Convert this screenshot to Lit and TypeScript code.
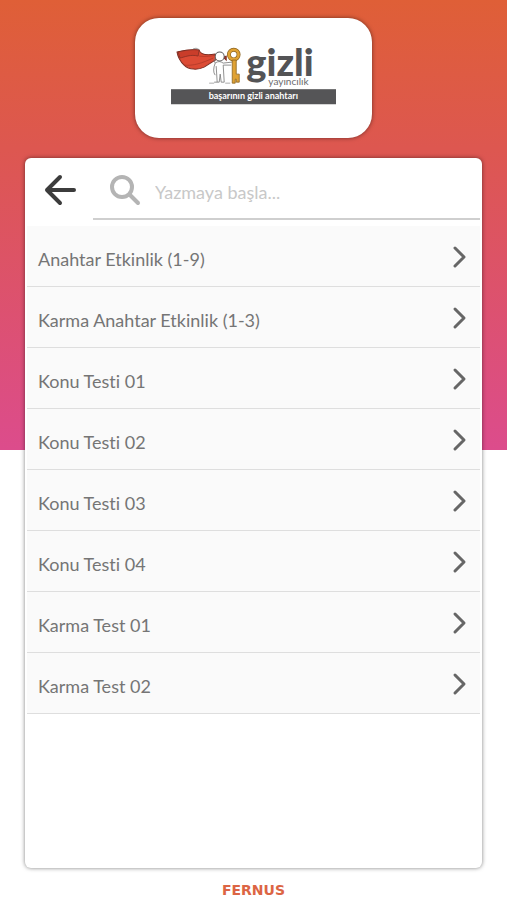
import { LitElement, html, css, svg } from "lit";
import { customElement, state } from "lit/decorators.js";

const ITEMS = [
  "Anahtar Etkinlik (1-9)",
  "Karma Anahtar Etkinlik (1-3)",
  "Konu Testi 01",
  "Konu Testi 02",
  "Konu Testi 03",
  "Konu Testi 04",
  "Karma Test 01",
  "Karma Test 02",
];

@customElement("brand-logo")
class BrandLogo extends LitElement {
  static styles = css`
    :host { display: block; }
    svg { display: block; width: 100%; height: auto; }
    .name { font: 900 38px Lato, sans-serif; fill: #545456; }
    .sub { font: 400 10px Lato, sans-serif; fill: #6c6c6e; }
    .motto { font: 700 9px Lato, sans-serif; fill: #fff; }
  `;

  render() {
    return html`
      <svg viewBox="0 -12 165 69" role="img" aria-label="gizli yayıncılık">
        ${svg`
        <path d="M6 4 C14 2 22 1 28 2 C29 5 33 8 44 6 L46 11 C42 13 38 16 33 19 C27 22 18 22 13 17 C10 14 7 10 6 4Z" fill="#dc4b35" stroke="#7d2d22" stroke-width="1"/>
        <path d="M7 4 C15 2 22 1 28 2 L27 8 C20 6 13 9 9 10Z" fill="#c93d2a" stroke="#7d2d22" stroke-width=".7"/>
        <path d="M28 8 C35 9 40 8 45 7 M13 17 C22 18 31 15 42 10" fill="none" stroke="#a93626" stroke-width=".7"/>
        <path d="M22 .8 Q25 -.8 28 1.5" fill="none" stroke="#777" stroke-width=".7"/>
        <path d="M52 9 l3 3 v-4z" fill="#a93626" stroke="#7d2d22" stroke-width="1"/>
        <path d="M44 15 Q48 12 52 15 L61 14 Q64 12 68 10 M52 17 L60 17 M44 15 Q41 23 44 27 M45 18 L46 34 H43 M52 17 L53 34 H50 L49 26 L48 34 H46 M44 15 Q42 12 44 10" fill="none" stroke="#777" stroke-width=".8"/>
        <circle cx="48.500" cy="8.500" r="4.500" fill="#fff" stroke="#5c5c5c" stroke-width="1"/>
        <path d="M38 35 H43 M54 35 H59" stroke="#999" stroke-width=".8"/>
        <circle cx="62.500" cy="6.500" r="4.800" fill="none" stroke="#8c6420" stroke-width="4"/>
        <circle cx="62.500" cy="6.500" r="4.800" fill="none" stroke="#e0a233" stroke-width="2.600"/>
        <path d="M61 12 H65 V26 H68 V34 H65 V31 H64 V35 H61Z" fill="#e0a233" stroke="#8c6420" stroke-width=".8"/>
        <text class="name" x="75" y="28">gizli</text>
        <text class="sub" x="97" y="37">yayıncılık</text>
        <rect y="41" width="165" height="15" fill="#555557"/>
        <text class="motto" x="82" y="51" text-anchor="middle">başarının gizli anahtarı</text>
        `}
      </svg>
    `;
  }
}

@customElement("app-root")
class AppRoot extends LitElement {
  static styles = css`
    :host {
      display: block;
      font-family: Lato, sans-serif;
      font-variant-ligatures: none;
      color: #757575;
    }
    * { box-sizing: border-box; }
    .page {
      min-height: 100vh;
      display: flex;
      flex-direction: column;
      padding: 18px 25px 0;
      background: linear-gradient(#df5f37, #dd5750 33%, #dc4c8c) top / 100% 50vh no-repeat #fff;
    }
    .brand {
      align-self: center;
      width: 52%;
      max-width: 320px;
      padding: 18px 36px 33px;
      border-radius: 24px;
      background: #fff;
      box-shadow: 0 0 4px rgba(0, 0, 0, 0.5);
    }
    .panel {
      flex: 1;
      margin-top: 20px;
      padding: 3px 2px;
      border-radius: 6px;
      background: #fff;
      box-shadow: 0 0 4px rgba(0, 0, 0, 0.5);
    }
    button {
      border: 0;
      background: none;
      font: inherit;
      font-variant-ligatures: none;
      color: inherit;
      cursor: pointer;
    }
    .top { display: flex; align-items: stretch; height: 59px; }
    .back { width: 66px; padding: 0; display: grid; place-items: center; }
    .search {
      flex: 1;
      display: flex;
      align-items: center;
      gap: 14px;
      padding-left: 16px;
      border-bottom: 2px solid #cfcfcf;
    }
    input {
      flex: 1;
      min-width: 0;
      height: 40px;
      padding: 4px 0 0;
      border: 0;
      outline: 0;
      background: none;
      font: inherit;
      font-size: 18px;
      color: #757575;
    }
    input::placeholder { color: #c8c8c8; opacity: 1; }
    ul { list-style: none; margin: 6px 0 0; padding: 0; }
    li { border-bottom: 1px solid #dedede; background: #fafafa; }
    .row {
      width: 100%;
      height: 60px;
      padding: 2px 13px 0 11px;
      display: flex;
      align-items: center;
      justify-content: space-between;
      font-size: 18px;
      text-align: left;
    }
    .label { padding-top: 4px; }
    svg { display: block; fill: none; stroke-linecap: round; stroke-linejoin: round; }
    footer {
      height: 32px;
      text-align: center;
      font: 700 14px/44px "DejaVu Sans", sans-serif;
      color: #dc6544;
    }
  `;

  @state() private query = "";

  render() {
    const q = this.query.toLocaleLowerCase("tr");
    const items = ITEMS.filter((t) => t.toLocaleLowerCase("tr").includes(q));
    return html`
      <div class="page">
        <header class="brand"><brand-logo></brand-logo></header>
        <main class="panel">
          <div class="top">
            <button class="back" aria-label="Geri">
              <svg width="34" height="34" viewBox="0 0 34 34" stroke="#3c3c3c" stroke-width="4">
                <path d="M31 16 H4 M17 3 L4 16 L17 29" />
              </svg>
            </button>
            <label class="search">
              <svg width="32" height="32" viewBox="0 0 32 32" stroke="#b4b4b4" stroke-width="4">
                <circle cx="13" cy="13" r="10" />
                <path d="M21 21 L29 29" />
              </svg>
              <input
                type="text"
                aria-label="Ara"
                placeholder="Yazmaya başla..."
                .value=${this.query}
                @input=${(e: Event) => (this.query = (e.target as HTMLInputElement).value)}
              />
            </label>
          </div>
          <ul>
            ${items.map(
              (t) => html`<li>
                <button class="row">
                  <span class="label">${t}</span>
                  <svg width="16" height="24" viewBox="0 0 16 24" stroke="#666" stroke-width="3">
                    <path d="M4 3 L13 12 L4 21" />
                  </svg>
                </button>
              </li>`
            )}
          </ul>
        </main>
        <footer>FERNUS</footer>
      </div>
    `;
  }
}
